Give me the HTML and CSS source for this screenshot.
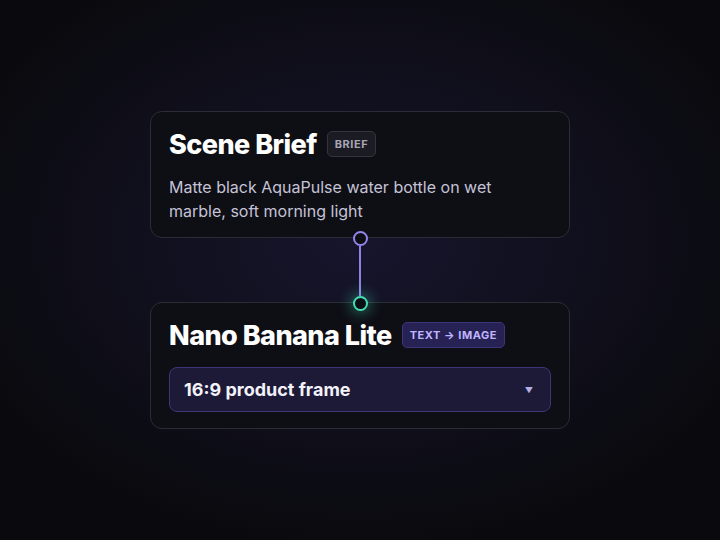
FILE: index.html
```html
<!DOCTYPE html>
<html lang="en">
<head>
    <meta charset="UTF-8">
    <meta name="viewport" content="width=device-width, initial-scale=1.0">
    <title>Scene Brief → Nano Banana Lite</title>
    <link rel="stylesheet" href="styles.css">
</head>
<body>
    <main class="flow">
        <!-- Nó de entrada -->
        <section class="node node-brief">
            <div class="node-head">
                <h2>Scene Brief</h2>
                <span class="tag">BRIEF</span>
            </div>
            <p class="brief">Matte black AquaPulse water bottle on wet marble, soft morning light</p>
        </section>

        <!-- Ligação entre os nós -->
        <div class="link">
            <span class="port port-out"></span>
            <span class="wire"></span>
            <span class="port port-in"></span>
        </div>

        <!-- Nó do modelo -->
        <section class="node">
            <div class="node-head">
                <h2>Nano Banana Lite</h2>
                <span class="tag tag-model">TEXT → IMAGE</span>
            </div>
            <div class="select">
                <span>16:9 product frame</span>
                <span class="caret">▼</span>
            </div>
        </section>
    </main>
</body>
</html>
```

FILE: styles.css
```css
/* Estilo Global */
body {
    margin: 0;
    height: 540px;
    font-family: Inter, "Noto Sans", sans-serif;
    background: radial-gradient(ellipse 430px 310px at 360px 240px, #17152c 0%, #100f1c 55%, #0a0a0e 100%);
    color: #f4f4f8;
    display: flex;
    align-items: center;
    justify-content: center;
}
.flow {
    width: 420px;
    display: flex;
    flex-direction: column;
    align-items: stretch;
}
/* Cartões dos nós */
.node {
    background-color: #0e0e15;
    border: 1px solid #2c2c37;
    border-radius: 12px;
    padding: 16px 18px 16px;
}
.node-brief {
    padding-bottom: 14px;
}
.node-head {
    display: flex;
    align-items: center;
    gap: 10px;
    height: 32px;
}
.node-head h2 {
    margin: 0;
    font-size: 27px;
    font-weight: 800;
    letter-spacing: -0.02em;
    color: #ffffff;
}
.tag {
    font-size: 11px;
    font-weight: 700;
    letter-spacing: 0.05em;
    padding: 5px 7px;
    border-radius: 5px;
    background-color: #1b1b24;
    border: 1px solid #34343f;
    color: #a6a6b6;
}
.tag-model {
    background-color: #272254;
    border-color: #3b357a;
    color: #c0b5ff;
}
.brief {
    margin: 15px 0 0;
    font-size: 16px;
    line-height: 24px;
    color: #c5c3d6;
    max-width: 360px;
}
/* Ligação */
.link {
    display: flex;
    flex-direction: column;
    align-items: center;
    margin: -7px 0 -9px;
    position: relative;
    z-index: 1;
}
.port {
    width: 11px;
    height: 11px;
    border-radius: 50%;
    background-color: #0d0d14;
}
.port-out {
    border: 2px solid #9184ea;
}
.port-in {
    border: 2px solid #43dcb2;
    box-shadow: 0 0 14px 3px rgba(67, 220, 178, 0.4);
}
.wire {
    width: 2px;
    height: 50px;
    background-color: #8f82e6;
}
/* Seletor */
.select {
    margin-top: 16px;
    height: 43px;
    display: flex;
    align-items: center;
    justify-content: space-between;
    padding: 0 17px 0 14px;
    background-color: #1d1a38;
    border: 1px solid #3b3675;
    border-radius: 8px;
    font-size: 18px;
    font-weight: 700;
    color: #f2f2f8;
}
.caret {
    font-size: 8px;
    color: #b4afe6;
}
```
